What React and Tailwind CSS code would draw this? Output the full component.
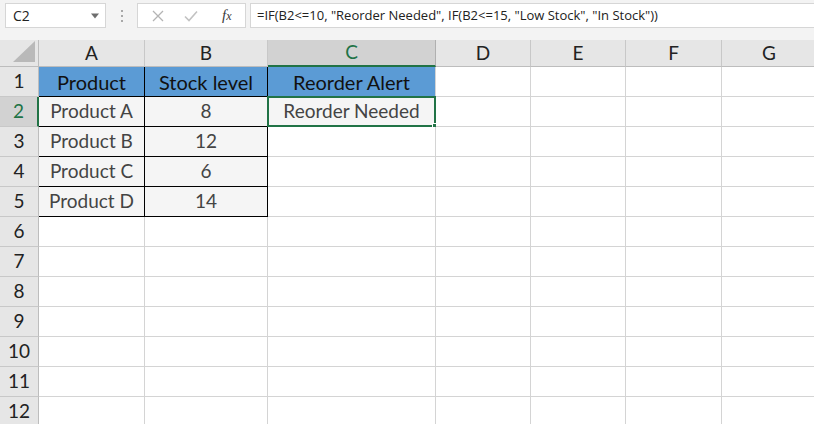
const font = { fontFamily: "Lato, 'Liberation Sans', sans-serif" };
const ui = { fontFamily: "'Open Sans', 'Liberation Sans', sans-serif" };

const cols = [
  { key: 'A', w: 'w-[106px]' },
  { key: 'B', w: 'w-[123px]' },
  { key: 'C', w: 'w-[168px]' },
  { key: 'D', w: 'w-[95px]' },
  { key: 'E', w: 'w-[95px]' },
  { key: 'F', w: 'w-[96px]' },
  { key: 'G', w: 'w-[95px]' },
];

const data = {
  1: { A: 'Product', B: 'Stock level', C: 'Reorder Alert' },
  2: { A: 'Product A', B: '8', C: 'Reorder Needed' },
  3: { A: 'Product B', B: '12' },
  4: { A: 'Product C', B: '6' },
  5: { A: 'Product D', B: '14' },
};

const rows = [1, 2, 3, 4, 5, 6, 7, 8, 9, 10, 11, 12];

function Cell({ row, col }) {
  const value = data[row]?.[col.key];
  const header = row === 1 && ['A', 'B', 'C'].includes(col.key);
  const table = row <= 5 && ['A', 'B'].includes(col.key);
  const filled = (row >= 2 && row <= 5 && ['A', 'B'].includes(col.key)) || (row === 2 && col.key === 'C');
  const selected = row === 2 && col.key === 'C';

  let cls = `${col.w} shrink-0 h-full flex items-center justify-center border-r border-b relative `;
  if (table) cls += 'border-black ';
  else if (header) cls += 'border-r-[#d4d4d4] border-b-black ';
  else cls += 'border-[#d4d4d4] ';
  if (header) cls += 'bg-[#5b9bd5] text-[#111] text-[20px] ';
  else if (filled) cls += 'bg-[#f5f5f5] text-[#444] text-[19px] ';
  else cls += 'bg-white ';

  return (
    <div className={cls}>
      {value}
      {selected && (
        <div className="absolute -left-px -top-px -right-px -bottom-px border-2 border-[#217346] pointer-events-none">
          <div className="absolute -right-[5px] -bottom-[5px] w-[7px] h-[7px] bg-[#217346] border border-white" />
        </div>
      )}
    </div>
  );
}

export default function App() {
  return (
    <div className="w-[814px] h-[424px] overflow-hidden bg-white" style={font}>

      {/* FORMULA BAR */}
      <div className="h-[40px] bg-[#f3f3f3] flex items-start pt-[3px] pl-[5px]">
        <div className="w-[101px] h-[25px] bg-white border border-[#d6d6d6] flex items-center justify-between pl-[7px] pr-[4px] text-[14px] text-[#222]" style={ui}>
          <span>C2</span>
          <svg width="10" height="6" viewBox="0 0 10 6" className="mr-[1px]"><path d="M1 0.5 L9 0.5 L5 5.5 Z" fill="#6e6e6e" /></svg>
        </div>
        <div className="w-[31px] h-[25px] flex flex-col items-center justify-center gap-[3px]">
          <span className="w-[2px] h-[2px] bg-[#a8a8a8]" />
          <span className="w-[2px] h-[2px] bg-[#a8a8a8]" />
          <span className="w-[2px] h-[2px] bg-[#a8a8a8]" />
        </div>
        <div className="w-[109px] h-[25px] bg-white border border-[#d6d6d6] flex items-center">
          <svg width="12" height="12" viewBox="0 0 12 12" className="ml-[14px]"><path d="M1 1 L11 11 M11 1 L1 11" stroke="#b4b4b4" strokeWidth="1.3" /></svg>
          <svg width="14" height="12" viewBox="0 0 14 12" className="ml-[20px]"><path d="M1 6.5 L5 10.5 L13 1.5" stroke="#c2c2c2" strokeWidth="1.6" fill="none" /></svg>
          <span className="ml-[24px] text-[15px] italic text-[#3a3a3a]" style={{ fontFamily: "'Liberation Serif', serif" }}>f<span className="text-[12px]">x</span></span>
        </div>
        <div className="flex-1 ml-[4px] h-[25px] bg-white border border-[#d6d6d6] border-r-0 flex items-center pl-[6px] text-[13px] text-[#222] whitespace-nowrap" style={ui}>
          =IF(B2&lt;=10, "Reorder Needed", IF(B2&lt;=15, "Low Stock", "In Stock"))
        </div>
      </div>

      {/* COLUMN HEADERS */}
      <div className="flex h-[27px]">
        <div className="w-[39px] shrink-0 h-full bg-[#e6e6e6] border-r border-b border-[#bdbdbd] relative">
          <svg width="22" height="21" viewBox="0 0 22 21" className="absolute right-[3px] bottom-[4px]"><path d="M22 0 L22 21 L0 21 Z" fill="#b9b9b9" /></svg>
        </div>
        {cols.map(col => (
          <div key={col.key}
            className={`${col.w} shrink-0 h-full flex items-center justify-center text-[19px] border-r ${col.key === 'C'
              ? 'bg-[#d2d2d2] text-[#217346] border-b-2 border-b-[#217346] border-r-[#b0b0b0]'
              : 'bg-[#e6e6e6] text-[#222] border-b border-b-[#bdbdbd] border-r-[#c8c8c8]'}`}>
            {col.key}
          </div>
        ))}
      </div>

      {/* GRID */}
      {rows.map(row => (
        <div key={row} className="flex h-[30px]">
          <div className={`w-[39px] shrink-0 h-full flex items-center justify-center text-[19px] border-b border-b-[#c8c8c8] ${row === 2
            ? 'bg-[#d2d2d2] text-[#217346] border-r-2 border-r-[#217346]'
            : 'bg-[#e6e6e6] text-[#222] border-r border-r-[#bdbdbd]'}`}>
            {row}
          </div>
          {cols.map(col => <Cell key={col.key} row={row} col={col} />)}
        </div>
      ))}
    </div>
  );
}
